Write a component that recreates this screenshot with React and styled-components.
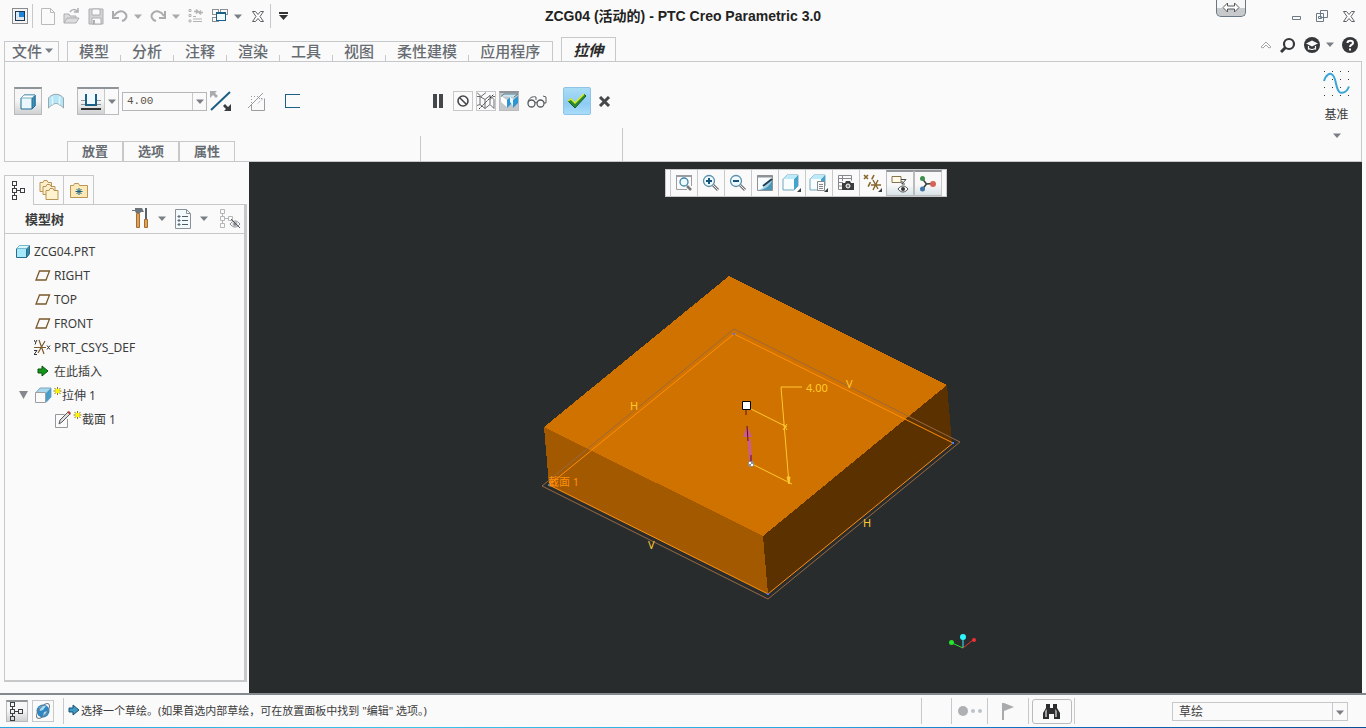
import { useState } from 'react';
import styled, { createGlobalStyle, css } from 'styled-components';

const LINE = '#c6c8ca';
const GREY = '#676c72';
const BLUE = '#1b6085';

const GlobalStyle = createGlobalStyle`
  * { box-sizing: border-box; }
  body {
    margin: 0;
    background: #fafafa;
    color: #3c3c3c;
    font-family: "Noto Sans", "Noto Sans CJK SC", sans-serif;
    font-size: 12px;
  }
  button, input, select { font: inherit; color: inherit; }
  svg { display: block; flex: none; }
`;

const Page = styled.div`
  display: flex;
  flex-direction: column;
  min-height: 100vh;
`;

/* ---------- title bar ---------- */

const TitleBar = styled.header`
  display: grid;
  grid-template-columns: 1fr auto 1fr;
  height: 32px;
`;

const QuickAccess = styled.div`
  display: flex;
  align-items: center;
  padding-left: 12px;
`;

const QuickGroup = styled.div`
  display: flex;
  align-items: center;
  gap: 8px;
`;

const SplitButton = styled.div`
  display: flex;
  align-items: center;
  gap: 6px;
`;

const IconButton = styled.button`
  display: flex;
  align-items: center;
  justify-content: center;
  flex: none;
  width: ${({ $w }) => $w || 16}px;
  height: ${({ $h }) => $h || 20}px;
  padding: 0;
  border: 0;
  background: none;
`;

const QuickSeparator = styled.span`
  width: 1px;
  height: 24px;
  margin: 0 8px 0 4px;
  background: ${LINE};
`;

const Title = styled.h1`
  margin: 0;
  color: #222;
  font-family: "Liberation Sans", "Noto Sans CJK SC", sans-serif;
  font-size: 14px;
  line-height: 32px;
`;

const WindowButtons = styled.div`
  display: flex;
  align-items: center;
  justify-content: flex-end;
  gap: 14px;
  padding-right: 10px;
`;

const DockHandle = styled.button`
  align-self: flex-start;
  display: flex;
  justify-content: center;
  width: 30px;
  height: 17px;
  margin-right: 30px;
  padding: 2px 0 0;
  border: 1px solid #697784;
  border-top: 0;
  border-radius: 0 0 5px 5px;
  background: linear-gradient(#f7f7f7 50%, #c8c9cb 50%);
`;

/* ---------- ribbon ---------- */

const TabRow = styled.nav`
  display: flex;
  align-items: flex-end;
  height: 29px;
  padding-left: 4px;
  gap: 8px;
  font-family: "Noto Sans CJK SC", sans-serif;
  font-size: 15px;
  font-weight: 500;
  color: ${GREY};
`;

const FileTab = styled.button`
  display: flex;
  align-items: center;
  gap: 3px;
  height: 20px;
  padding: 0 5px 2px 7px;
  border: 1px solid ${LINE};
  border-bottom: 0;
  background: none;
  line-height: 18px;
`;

const TabGroup = styled.div`
  display: flex;
  height: 20px;
  border: 1px solid ${LINE};
  border-bottom: 0;
`;

const Tab = styled.button`
  padding: 0 12px 2px 11px;
  border: 0;
  background: linear-gradient(${LINE}, ${LINE}) right bottom / 1px 6px no-repeat;
  line-height: 18px;
  &:last-child { background: none; }
`;

const ActiveTab = styled.button`
  height: 25px;
  margin-bottom: -1px;
  padding: 0 12px 1px 11px;
  border: 1px solid ${LINE};
  border-bottom: 0;
  background: #fafafa;
  color: #2a2a2a;
  font-style: italic;
  font-weight: 700;
  line-height: 24px;
`;

const TabTools = styled.div`
  display: flex;
  align-items: center;
  gap: 8px;
  height: 29px;
  margin-left: auto;
  padding: 0 8px 4px 0;
`;

const Ribbon = styled.section`
  display: flex;
  height: 101px;
  margin: 0 4px;
  border: 1px solid ${LINE};
`;

const Dashboard = styled.div`
  display: flex;
  flex-direction: column;
  justify-content: space-between;
  width: ${({ $w }) => $w}px;
  padding: 25px 0 0 ${({ $pad }) => $pad}px;
`;

const Controls = styled.div`
  display: flex;
  align-items: center;
  height: 28px;
  gap: ${({ $gap }) => $gap}px;
`;

const RibbonLine = styled.span`
  align-self: flex-end;
  width: 1px;
  height: ${({ $h }) => $h}px;
  background: ${LINE};
`;

const pressed = css`
  border: 1px solid #b9bbbd;
  border-top: 2px solid #8f9498;
  background: linear-gradient(#f6f6f6 45%, #cfd0d2);
`;

const PressedButton = styled(IconButton)`
  ${pressed}
`;

const BoxedButton = styled(IconButton)`
  border: 1px solid ${LINE};
`;

const DepthSplit = styled.div`
  display: flex;
  height: 28px;
  margin-left: 9px;
  ${pressed}
`;

const DepthArrow = styled(IconButton)`
  border-left: 1px solid ${LINE};
  background: #fafafa;
`;

const ValueBox = styled.div`
  display: flex;
  width: 85px;
  height: 19px;
  border: 1px solid #b4b6b8;
`;

const ValueInput = styled.input`
  flex: 1;
  min-width: 0;
  padding: 0 4px;
  border: 0;
  background: none;
  color: #5b5348;
  font-family: "Liberation Mono", monospace;
  font-size: 11px;
`;

const ValueArrow = styled(IconButton)`
  border-left: 1px solid ${LINE};
`;

const OptionTabs = styled.div`
  display: flex;
  padding-left: 53px;
`;

const OptionTab = styled.button`
  width: 56px;
  height: 20px;
  padding: 0 0 2px;
  border: 1px solid ${LINE};
  border-bottom: 0;
  background: none;
  color: ${GREY};
  font-family: "Noto Sans CJK SC", sans-serif;
  font-size: 13px;
  font-weight: 700;
  line-height: 18px;
`;

const ConfirmButton = styled(IconButton)`
  margin-left: 8px;
  border: 1px solid #8fc4e6;
  border-radius: 2px;
  background: linear-gradient(#aadcf5, #8ecbf3 60%, #a9dcfb);
`;

const DatumButton = styled.button`
  display: flex;
  flex-direction: column;
  align-items: center;
  gap: 9px;
  margin-left: auto;
  padding: 8px 11px 0;
  border: 0;
  background: none;
  font-size: 12px;
  line-height: 18px;
`;

/* ---------- model tree ---------- */

const Workspace = styled.main`
  display: flex;
  flex: 1;
  padding-right: 4px;
`;

const Sidebar = styled.aside`
  display: flex;
  flex-direction: column;
  flex: none;
  width: 249px;
  padding: 13px 2px 11px 4px;
`;

const SidebarTabs = styled.div`
  display: flex;
`;

const SidebarTab = styled.button`
  display: flex;
  align-items: center;
  justify-content: center;
  width: 30px;
  height: 29px;
  padding: 0;
  border: 1px solid ${LINE};
  border-width: 1px 1px 0 0;
  background: #fafafa;
  ${({ $active }) => $active && css`
    position: relative;
    height: 30px;
    margin-bottom: -1px;
    border-left-width: 1px;
  `}
`;

const TreePanel = styled.div`
  flex: 1;
  border: 1px solid ${LINE};
  border-right-width: 3px;
  border-bottom-width: 2px;
`;

const TreeHeader = styled.div`
  display: flex;
  align-items: center;
  height: 29px;
  padding: 0 1px 1px 20px;
  border-bottom: 1px solid ${LINE};
  gap: 9px;
`;

const TreeTitle = styled.h2`
  flex: 1;
  margin: 0;
  font-family: "Noto Sans CJK SC", sans-serif;
  font-size: 13px;
  line-height: 18px;
`;

const Tree = styled.ul`
  margin: 0;
  padding: 5px 0;
  list-style: none;
`;

const TreeRow = styled.li`
  display: flex;
  align-items: center;
  gap: ${({ $gap }) => $gap || 3}px;
  height: 24px;
  padding-left: ${({ $indent }) => $indent}px;
`;

const TreeToggle = styled(IconButton)`
  justify-content: flex-start;
`;

const TreeLabel = styled.span`
  display: flex;
  align-items: center;
  white-space: nowrap;
`;

/* ---------- graphics area ---------- */

const Viewport = styled.section`
  position: relative;
  display: flex;
  flex: 1;
  min-width: 0;
  background: #282c2d;
`;

const Scene = styled.svg`
  flex: 1;
  width: 100%;
  min-width: 0;
  font-family: "Noto Sans", "Noto Sans CJK SC", sans-serif;
  font-size: 11px;
`;

const ViewToolbar = styled.div`
  position: absolute;
  top: 7px;
  left: 50%;
  display: flex;
  padding: 0 4px;
  border: 1px solid ${LINE};
  background: #fafafa;
  transform: translateX(-50%);
`;

const ViewButton = styled.button`
  display: flex;
  align-items: center;
  justify-content: center;
  width: 27px;
  height: 26px;
  padding: 0;
  border: 0;
  border-left: 1px solid ${LINE};
  background: none;
  ${({ $on }) => $on && css`
    ${pressed}
    width: 28px;
    background: linear-gradient(#f8f8f8 55%, #d8e3e8);
  `}
  &:last-child { border-right: 1px solid ${LINE}; }
`;

/* ---------- status bar ---------- */

const StatusBar = styled.footer`
  display: flex;
  align-items: center;
  height: 34px;
  padding-left: 6px;
  border-top: 2px solid #84898e;
`;

const StatusButtons = styled.div`
  display: flex;
  gap: 4px;
  padding-right: 9px;
`;

const StatusButton = styled.button`
  display: flex;
  align-items: center;
  justify-content: center;
  width: 22px;
  height: 22px;
  padding: 0;
  border: 1px solid ${LINE};
  background: none;
  ${({ $on }) => $on && pressed}
`;

const StatusMessage = styled.p`
  display: flex;
  align-items: center;
  flex: 1;
  gap: 1px;
  margin: 0 0 0 4px;
  padding-bottom: 3px;
  font-size: 11px;
  white-space: nowrap;
`;

const StatusCell = styled.div`
  display: flex;
  align-items: center;
  justify-content: center;
  width: ${({ $w }) => $w}px;
  height: 26px;
  border-left: 1px solid ${LINE};
`;

const FindButton = styled.button`
  display: flex;
  align-items: center;
  justify-content: center;
  width: 40px;
  height: 25px;
  padding: 0;
  border: 1px solid #b9bbbd;
  border-radius: 3px;
  background: none;
`;

const FilterBox = styled.label`
  position: relative;
  width: 176px;
  margin: 0 18px 0 97px;
  svg {
    position: absolute;
    top: 8px;
    right: 4px;
    pointer-events: none;
  }
`;

const FilterSelect = styled.select`
  display: block;
  width: 100%;
  height: 19px;
  padding: 0 6px 2px;
  border: 1px solid ${LINE};
  border-radius: 0;
  appearance: none;
  background: linear-gradient(${LINE}, ${LINE}) right 14px top / 1px 100% no-repeat;
`;

const TaskbarEdge = styled.div`
  height: 1px;
  background: linear-gradient(90deg, #2aa5e0, #3cc4e8 30%, #2aa5e0 60%, #0f6fc0 75%, #0b4f96);
`;

/* ---------- icons ---------- */

const Icon = ({ w = 16, h = w, children, ...rest }) => (
  <svg width={w} height={h} viewBox={`0 0 ${w} ${h}`} fill="none" aria-hidden="true" {...rest}>
    {children}
  </svg>
);

const Caret = ({ color = '#7a7f85' }) => (
  <Icon w={8} h={5}><path d="M0 .5h8L4 5z" fill={color} /></Icon>
);

const AppIcon = () => (
  <Icon shapeRendering="crispEdges">
    <path d="M.5.5h15v15H.5z" stroke="#8a8c8e" fill="#f4f4f4" />
    <path d="M3 3h10v10H3z" fill="#1d3850" />
    <path d="M4 4h3v5h5v3H4z" fill="#dfe8ee" />
    <path d="M7 4h5v5H7z" fill="#1c86dd" />
  </Icon>
);
const NewIcon = () => (
  <Icon w={14} h={17} stroke="#b9babc"><path d="M.5.5h9l4 4v12H.5zM9.500.5v4h4" /></Icon>
);
const OpenIcon = () => (
  <Icon w={17} h={17} stroke="#adaeb0">
    <path d="M1 15V6h5l1 2h6v2M1 15l3-5h12l-3 5z" fill="#dcdcdc" />
    <path d="M7 4c2-3 5-3 7-1M15 0v4h-4" strokeWidth="1.500" />
  </Icon>
);
const SaveIcon = () => (
  <Icon h={17} stroke="#adaeb0">
    <path d="M1 1h14v15H1z" fill="#d3d3d4" />
    <path d="M4 1h8v6H4zM4 10h9v6H4z" fill="#fafafa" />
    <path d="M6 12v4" strokeWidth="2" />
  </Icon>
);
const UndoIcon = ({ flip }) => (
  <Icon h={14}>
    <g transform={flip ? 'translate(16 0) scale(-1 1)' : undefined}>
      <path d="M2 7c3-5 8-6 11-3s1 7-3 8" stroke="#a9abad" strokeWidth="2" />
      <path d="M1 2v7h6" stroke="#a9abad" strokeWidth="2" />
    </g>
  </Icon>
);
const RegenIcon = () => (
  <Icon stroke="#b1b3b5">
    <path d="M1 1.500h2v2H1zM1 6.500h2v2H1zM1 12h2v2H1zM5 8.500h3M5 13.500h9M5 11h9" />
    <path d="M6 3.500h4M8 1.500l2 2-2 2M15 4.500h-4M13 2.500l-2 2 2 2" strokeWidth="1.500" />
  </Icon>
);
const WindowsIcon = () => (
  <Icon stroke="#8b9095" shapeRendering="crispEdges">
    <path d="M.5 1.500h6v5h-6zM8.500 1.500h7v5h-7zM.5 9.500h6v4h-6z" />
    <path d="M4.500 4.500h9v8h-9z" stroke={BLUE} fill="#f3fbff" />
    <path d="M4 5.500h10" stroke={BLUE} />
  </Icon>
);
const CloseIcon = () => (
  <Icon w={12} h={11} stroke="#5d6063">
    <path d="M.5.5h3L6 3.500 8.500.5h3L8 5.500l3.500 5h-3L6 7.500l-2.500 3h-3L4 5.500z" fill="#fff" />
  </Icon>
);
const MoreIcon = () => (
  <Icon w={9} h={8}><path d="M0 0h9v2H0zM0 3h9L4.500 8z" fill="#333" /></Icon>
);
const HandleIcon = () => (
  <Icon w={18} h={11} stroke="#55595d">
    <path d="M1 5.500l4.500-4.500v3h7V1L17 5.500 12.500 10V7h-7v3z" fill="#fff" />
  </Icon>
);
const MinimizeIcon = () => (
  <Icon w={9} h={14} stroke="#6d7a86"><path d="M.5 7.500h8v3h-8z" /></Icon>
);
const RestoreIcon = () => (
  <Icon w={12} h={12} stroke="#6d7a86">
    <path d="M4.500.5h7v7h-7zM.5 3.500h7v8h-7z" fill="#fafafa" /><path d="M2.500 6.500h3v2h-3z" />
  </Icon>
);
const CollapseIcon = () => (
  <Icon w={12} h={8} stroke="#a3a5a8"><path d="M1 6l5-5 5 5-2 1-3-3-3 3z" fill="#fff" /></Icon>
);
const SearchIcon = () => (
  <Icon stroke="#35383b"><circle cx="9" cy="7" r="5" strokeWidth="2.200" /><path d="M5.500 10.500L1 15" strokeWidth="3" /></Icon>
);
const LearnIcon = () => (
  <Icon>
    <circle cx="8" cy="8" r="8" fill="#35383b" />
    <path d="M2 6.500L8 3.500l6 3-6 3z" fill="#fafafa" />
    <path d="M4.500 9v3c1.500-.5 2.500.5 3.500.5s2-1 3.500-.5V9" stroke="#fafafa" strokeWidth="1.200" />
  </Icon>
);
const HelpIcon = () => (
  <Icon>
    <circle cx="8" cy="8" r="8" fill="#35383b" />
    <path d="M5.500 6c0-3 5.500-3 5.500 0 0 2-3 1.500-3 4" stroke="#fff" strokeWidth="2" />
    <path d="M7 11.500h2v2H7z" fill="#fff" />
  </Icon>
);

const SolidIcon = () => (
  <Icon w={16} stroke="#1f6b90" strokeLinejoin="round">
    <path d="M1 4l3-3h11v11l-3 3H1z" fill="#eaf8fd" />
    <path d="M12 4l3-3v11l-3 3z" fill="#3f93ba" />
    <path d="M1 4l3-3h11l-3 3z" fill="#fff" stroke="#6fa8c0" />
  </Icon>
);
const SurfaceIcon = () => (
  <Icon>
    <path d="M.5 5c4-5 11-5 15 0v10c-2-2-3-3-4-3-2-2-5-2-7 0-1 0-2 1-4 3z" fill="#b5e6f5" stroke="#9aa7ad" />
    <path d="M4.500 3.500v8M11.500 3.500v8" stroke="#e2f7fd" strokeWidth="1.500" />
  </Icon>
);
const DepthIcon = () => (
  <Icon w={24} h={22}>
    <path d="M2 9.500h20M2 13.500h20" stroke="#8e9296" />
    <path d="M7 3v11h10V3" fill="#eefaff" stroke={BLUE} strokeWidth="2" />
    <path d="M2 18h20" stroke="#333" strokeWidth="2" />
  </Icon>
);
const FlipIcon = () => (
  <Icon w={21} h={20}>
    <path d="M1 19L20 1" stroke={BLUE} strokeWidth="2" />
    <path d="M0 0h7L5 2l3 3-2 2-3-3-3 3z" fill="#a9abad" />
    <path d="M21 20h-7l2-2-3-3 2-2 3 3 3-3z" fill="#3a3d40" />
  </Icon>
);
const CutIcon = () => (
  <Icon w={19} h={19} stroke="#9a9da0">
    <path d="M4.500 12v6.500h13V6.500" /><path d="M4.500 4v7M4 4.500h8" strokeDasharray="1 2" /><path d="M1 16L16 1" />
    <path d="M12 6.500h4L10 12" strokeDasharray="1 1" />
  </Icon>
);
const ThickenIcon = () => (
  <Icon w={16} stroke={BLUE} shapeRendering="crispEdges"><path d="M15.500 1.500h-14v13h14" /></Icon>
);
const PauseIcon = () => (
  <Icon w={12} h={14}><path d="M1 0h4v14H1zM7 0h4v14H7z" fill="#45484b" /></Icon>
);
const NoneIcon = () => (
  <Icon w={14} stroke="#45484b"><circle cx="7" cy="7" r="5" strokeWidth="1.600" /><path d="M3.500 3.500l7 7" strokeWidth="1.600" /></Icon>
);
const WirePreviewIcon = () => (
  <Icon w={18} stroke="#6a6c6e">
    <path d="M0 4.500h3l5 3v9l-5-4-3 1M3 4.500v8M8 7.500l5-4v9l-5 4M13 7.500l3-3h2M13 3.500l4 4v9l-4-4M0 .5l4 4M9 .5l-5 4" />
    <path d="M2 17L17 2" strokeDasharray="2 1" stroke="#333" />
  </Icon>
);
const ShadePreviewIcon = () => (
  <Icon w={18} h={17}>
    <path d="M0 0h18v17H0z" fill="#c3c7c9" />
    <path d="M1 3l6 4v7l-6-5z" fill="#fff" /><path d="M7 7l5-4v7l-5 5z" fill="#2c95d3" />
    <path d="M10 3l4 4v7l-4-5z" fill="#e8f8fe" /><path d="M13 7l5-4v7l-5 5z" fill="#2c95d3" />
    <path d="M1 3.500L4 1h14l-4 3" stroke="#5c7886" fill="#c9e7f2" />
  </Icon>
);
const GlassesIcon = () => (
  <Icon w={20} h={13} stroke="#55595d">
    <circle cx="4.500" cy="8.500" r="3.500" strokeWidth="1.300" /><circle cx="13.500" cy="8.500" r="3.500" strokeWidth="1.300" />
    <path d="M8 8c0-1 2-1 2 0M1 7C2 3 5 1 9 2v3M17 8h2V2l-3-1" />
  </Icon>
);
const CheckIcon = () => (
  <Icon w={20} h={15}>
    <path d="M1 7l3-2 4 4L17 0l2 2L8 14z" fill="#2c8a32" stroke="#1d5b2b" /><path d="M1 7l3-2 4 4L17 0" stroke="#d6ec25" strokeWidth="1.500" />
  </Icon>
);
const CancelIcon = () => (
  <Icon w={13} h={11} stroke="#45484b"><path d="M2 1l9 9M11 1l-9 9" strokeWidth="3" /></Icon>
);
const DatumIcon = () => {
  const dots = [1, 9, 17, 25];
  return (
    <Icon w={27}>
      {dots.map((y) => dots.map((x) => <path key={`${x}-${y}`} d={`M${x} ${y}h1v1h-1z`} fill="#333" />))}
      <path d="M1 11C3 4 7 3 9 4.500c5 3 3 15 8 18 4 1 7-1 9-6" stroke="#3ba5d5" strokeWidth="2" />
    </Icon>
  );
};

const TreeIcon = () => (
  <Icon w={14} h={19} stroke="#3c3f42" shapeRendering="crispEdges">
    <path d="M.5.5h4v4h-4zM.5 7.500h4v4h-4zM.5 14.500h4v4h-4zM8.500 7.500h4v4h-4zM2.500 4.500v3M2.500 11.500v3M4.500 9.500h4" />
  </Icon>
);
const FoldersIcon = () => (
  <Icon w={20} stroke="#ba9554">
    <path d="M1 2.500h3l1-2h3l1 2h3.500v9H1z" fill="#fbeecb" />
    <path d="M4 6.500h3l1-2h3l1 2h4v8H4z" fill="#fbeecb" />
    <path d="M7 10.500h3l1-2h3l1 2h4v9H7z" fill="#fdf3cf" />
  </Icon>
);
const FavoritesIcon = () => (
  <Icon w={18} h={17} stroke="#ba9554">
    <path d="M.5 3.500h3l1-2h4l1 2h8v12H.5z" fill="#fbeab8" />
    <path d="M9 6v7M5.500 9.500h7M6.500 7l5 5M11.500 7l-5 5" stroke={BLUE} />
  </Icon>
);
const ToolsIcon = () => (
  <Icon w={17} h={21}>
    <path d="M4.500 5.500h3v14h-3z" fill="#e0a35d" stroke="#a56d2d" />
    <path d="M0 2h3V0h7l2 4H9L8 5H4L3 3H0z" fill="#6c747b" />
    <path d="M14 0v12" stroke="#596066" strokeWidth="2" />
    <path d="M12.500 11.500h3v8h-3z" fill="#e0a35d" stroke="#a56d2d" />
  </Icon>
);
const ListIcon = () => (
  <Icon w={16} h={20} stroke="#8a9298">
    <path d="M.5.5h11l4 4v15H.5z" fill="#f3fafd" /><path d="M11.500.5v4h4" />
    <path d="M3 7h2v1H3zM3 11h2v1H3zM3 15h2v1H3zM7 7.500h6M7 11.500h6M7 15.500h6" stroke="#4f5a62" />
  </Icon>
);
const TreeHideIcon = () => (
  <Icon w={21} h={20} stroke="#b4b6b8">
    <path d="M.5.5h4v4h-4zM.5 7.500h4v4h-4zM.5 14.500h4v4h-4zM8.500 7.500h4v4h-4zM4.500 9.500h4M2.500 4.500v3M2.500 11.500v3" />
    <path d="M10 15c3-4 7-4 10 0-3 4-7 4-10 0z" stroke="#85898d" fill="#fafafa" /><circle cx="15" cy="15" r="2" fill="#85898d" /><path d="M11 10l9 9" stroke="#55595d" />
  </Icon>
);
const PartIcon = () => (
  <Icon w={14} h={13} stroke="#2b6d8c" strokeLinejoin="round">
    <path d="M.5 3.500l3-3h10v8l-3 4H.5z" fill="#a8e8fb" /><path d="M10.500 3.500l3-3v8l-3 4z" fill="#3389aa" />
    <path d="M.5 3.500l3-3h10l-3 3z" fill="#d9f6fd" stroke="#7ab6cd" />
  </Icon>
);
const PlaneIcon = () => (
  <Icon h={11} stroke="#7b5a2b"><path d="M4.500 1H14.500l-3.500 9H1z" strokeWidth="1.300" /></Icon>
);
const CsysIcon = () => (
  <Icon w={17} stroke="#7b5a2b">
    <path d="M0 8.500h12M5 1l5 14M11 2L4 14" strokeWidth="1.200" />
    <path d="M0 1l1.500 2.500L3 1M2 3.500L1 5.500M0 11.500h3L0 15.500h3M13 6.500l3 4M16 6.500l-3 4" stroke="#333" />
  </Icon>
);
const InsertIcon = () => (
  <Icon h={12}><path d="M3 4h4V1l6 5-6 5V8H3z" fill="#13961a" stroke="#0a5210" /></Icon>
);
const ExtrudeIcon = () => (
  <Icon w={17}>
    <path d="M1 5.500L5 1h11v9l-5 5.500" fill="#a9d8ee" stroke="#7fa7ba" />
    <path d="M11 6l5-5v9l-5 5z" fill="#4a9cc9" /><path d="M.5 5.500h10v10H.5z" fill="#fafafa" stroke="#9c9ea0" />
  </Icon>
);
const SketchIcon = () => (
  <Icon w={17}>
    <path d="M12.500 8v8.500H.5v-13h9" stroke="#96989a" /><path d="M4 13l1-4 8-8 2 2-8 8z" fill="#ddd" stroke="#55595d" /><path d="M12 1l2-1 2 2-1 2z" fill="#b54136" />
  </Icon>
);
const StarIcon = () => (
  <Icon w={9} h={16}><path d="M4.500 0v8M.5 4h8M1.500 1l6 6M7.500 1l-6 6" stroke="#8c7d12" /><path d="M2.500 2h4v4h-4z" fill="#fff200" /></Icon>
);

const ZoomGlyph = ({ sign }) => (
  <Icon w={18}>
    <path d="M11 11l5 5" stroke="#777" strokeWidth="3" /><path d="M11 11l5 5" stroke="#e8e8e8" />
    <circle cx="7" cy="7" r="5.500" fill="#eefaff" stroke="#5b8fa8" strokeWidth="1.300" />
    <path d={sign} stroke="#13557e" strokeWidth="2" />
  </Icon>
);
const RefitIcon = () => (
  <Icon w={18}>
    <path d="M1 2h16" stroke="#9a9ea2" strokeWidth="2" /><path d="M1.500 2v13.500H12M16.500 3v9" stroke="#9a9ea2" />
    <path d="M12 12l4 4" stroke="#777" strokeWidth="2.500" />
    <circle cx="9" cy="8" r="4" fill="#eefaff" stroke="#3e85a5" strokeWidth="1.300" />
  </Icon>
);
const RepaintIcon = () => (
  <Icon>
    <path d="M.5.500h15v15H.5z" fill="#f8fdff" stroke="#8e9296" /><path d="M1 15c4-1 6-3 8-5l6-6v11z" fill="#9dd0e4" />
    <path d="M4 15c5-1 8-4 11-9v9z" fill="#4b97b8" /><path d="M6 11l9-7" stroke="#1c3e52" strokeWidth="2" /><path d="M0 1.500h16" stroke="#8e9296" strokeWidth="2" />
  </Icon>
);
const CubeViewIcon = ({ page }) => (
  <Icon w={19} h={18}>
    <path d="M1 5l4-4h11v11l-4 4H1z" fill="#f8fdff" stroke="#71a5bc" />
    <path d="M12 5l4-4v11l-4 4z" fill="#45a3cc" /><path d="M1 5l4-4h11l-4 4z" fill="#bdeaf8" />
    {page && <><path d="M8.500 7.500h7v9h-7z" fill="#fafafa" stroke="#85898d" /><path d="M10 10.500h4M10 12.500h4M10 14.500h4" stroke="#85898d" /></>}
    <path d="M19 14v4h-4z" fill="#3a3d40" />
  </Icon>
);
const ViewManagerIcon = () => (
  <Icon w={18} stroke="#85898d">
    <path d="M1.500 1.500h13v5M1.500 1.500v14H5M1 4.500h13M1 8.500h5M1 12h4M5.500 1v6" />
    <path d="M5 9h3l1-2h4l1 2h3v7H5z" fill="#3a3d40" stroke="none" /><circle cx="11" cy="12" r="2" fill="#777" stroke="#fff" />
  </Icon>
);
const DatumDisplayIcon = () => (
  <Icon w={19} h={18} stroke="#86662c">
    <path d="M1 1l4 4M5 1L1 5" strokeWidth="1.600" /><path d="M11 1L4 15" strokeDasharray="5 3" strokeWidth="1.600" />
    <path d="M8 11h10M10 6l5 9M15 6l-5 10" strokeWidth="1.400" /><path d="M19 14v4h-4z" fill="#3a3d40" stroke="none" />
  </Icon>
);
const AnnotationIcon = () => (
  <Icon w={18} h={18}>
    <path d="M1 1.500h9v6H1z" fill="#fffbe6" stroke="#86744f" /><path d="M10 4.500h5L11 9M11 6v3h3" stroke="#45484b" />
    <path d="M7 14c3-4 7-4 10 0-3 4-7 4-10 0z" fill="#fff" stroke="#45484b" /><circle cx="12" cy="14" r="2" fill="#333" />
  </Icon>
);
const SpinCenterIcon = () => (
  <Icon w={18} h={18}>
    <path d="M3.500 4l4 5 7-.5M7.500 9l-4 5" stroke="#35383b" strokeWidth="1.500" />
    <circle cx="3.500" cy="3.500" r="2.500" fill="#3f8e4d" /><circle cx="14" cy="9" r="3" fill="#d66354" /><circle cx="3.500" cy="14" r="2.500" fill="#3e73a8" />
  </Icon>
);

const BrowserIcon = () => (
  <Icon w={18}>
    <circle cx="9" cy="9" r="6.500" fill="#2d87c4" /><path d="M5 6c2-3 5-3 7-2l-3 4-3 1zM10 10l4-1-2 4-3 1z" fill="#a5daf0" />
    <ellipse cx="9" cy="9" rx="9" ry="4" transform="rotate(-50 9 9)" stroke="#6f7b86" />
  </Icon>
);
const PromptIcon = () => (
  <Icon w={12} h={12}><path d="M1 4h4V1l6 5-6 5V8H1z" fill="#3b9ac6" stroke="#1a4f70" /></Icon>
);
const RegenStatusIcon = () => (
  <Icon w={26} h={12}><circle cx="6" cy="6" r="5" fill="#aeb0b3" /><circle cx="16" cy="6" r="2" fill="#bcc3c8" /><circle cx="23" cy="6" r="2" fill="#bcc3c8" /></Icon>
);
const FlagIcon = () => (
  <Icon w={12} h={17}><path d="M0 0h2v17H0zM2 0l10 4L2 8z" fill="#a9abad" /></Icon>
);
const BinocularsIcon = () => (
  <Icon w={17} h={16}>
    <path d="M3 1h4v4h3V1h4v4l3 5v6h-6v-5H6v5H0v-6l3-5z" fill="#2b2d2f" />
    <path d="M2 8l2-2v8H2zM12 6l2 2v6h-2z" fill="#9b9ea1" />
  </Icon>
);

/* ---------- data ---------- */

const ribbonTabs = ['模型', '分析', '注释', '渲染', '工具', '视图', '柔性建模', '应用程序'];
const optionTabs = ['放置', '选项', '属性'];

const treeRows = [
  { label: 'ZCG04.PRT', indent: 11, gap: 4, icon: <PartIcon /> },
  { label: 'RIGHT', indent: 30, icon: <PlaneIcon /> },
  { label: 'TOP', indent: 30, icon: <PlaneIcon /> },
  { label: 'FRONT', indent: 30, icon: <PlaneIcon /> },
  { label: 'PRT_CSYS_DEF', indent: 29, icon: <CsysIcon /> },
  { label: '在此插入', indent: 30, icon: <InsertIcon /> },
  { label: '拉伸 1', indent: 14, gap: 1, icon: <ExtrudeIcon />, open: true, fresh: true },
  { label: '截面 1', indent: 50, gap: 1, icon: <SketchIcon />, fresh: true },
];

const viewButtons = [
  { name: '重新调整', icon: <RefitIcon /> },
  { name: '放大', icon: <ZoomGlyph sign="M4 7h6M7 4v6" /> },
  { name: '缩小', icon: <ZoomGlyph sign="M4 7h6" /> },
  { name: '重画', icon: <RepaintIcon /> },
  { name: '显示样式', icon: <CubeViewIcon /> },
  { name: '已命名视图', icon: <CubeViewIcon page /> },
  { name: '视图管理器', icon: <ViewManagerIcon /> },
  { name: '基准显示', icon: <DatumDisplayIcon /> },
  { name: '注释显示', icon: <AnnotationIcon />, on: true },
  { name: '旋转中心', icon: <SpinCenterIcon />, on: true },
];

function ModelScene() {
  return (
    <Scene viewBox="0 0 1113 531" role="img" aria-label="ZCG04">
      <g shapeRendering="crispEdges">
        <path d="M480 114l218 109-184 151-219-109z" fill="#d07200" />
        <path d="M295 265l219 109 5 58-219-109z" fill="#a35900" />
        <path d="M514 374l184-151 5 58-184 151z" fill="#5b3100" />
      </g>
      <g fill="none">
        <path d="M485 167l226 113-192 157-226-113z" stroke="#9a6840" />
        <path d="M485 172l219 109-185 151-219-109z" stroke="#ff8f0c" />
        <path d="M553 225h-21l8 97M502 247l36 18M503 302l40 20" stroke="#ffc92e" />
        <path d="M534 262l4 6M538 262l-4 6" stroke="#ffc92e" />
        <path d="M502 301l-2-24" stroke="#c95a94" strokeWidth="3" />
        <path d="M498 264l-4 11h9z" fill="#c95a94" />
        <path d="M502 301v-8M499 279l-1-15M497 247v6" stroke="#5c1010" />
      </g>
      <path d="M538 315h3l-1 7z" fill="#ffc92e" stroke="#ffc92e" />
      <path d="M493.500 239.500h8v8h-8z" fill="#fff" stroke="#000" />
      <circle cx="502" cy="302" r="3" fill="#8f9396" />
      <path d="M500 300h2v2h-2zM502 302h2v2h-2z" fill="#fff" />
      <path d="M484 171h2v2h-2zM703 280h2v2h-2zM518 431h2v2h-2zM299 322h2v2h-2z" fill="#5577f0" />
      <g fill="#ffc92e">
        <text x="557" y="230">4.00</text>
        <text x="381" y="248">H</text>
        <text x="597" y="226">V</text>
        <text x="614" y="365">H</text>
        <text x="399" y="387">V</text>
      </g>
      <text x="299" y="324" fill="#ff8f0c">截面 1</text>
      <path d="M714 486v-10" stroke="#2ff5ff" />
      <path d="M714 486l-11-5" stroke="#26e62c" />
      <path d="M714 486l10-8" stroke="#f03030" />
      <circle cx="714" cy="475" r="3" fill="#2ff5ff" />
      <circle cx="702.500" cy="480.500" r="2.500" fill="#26e62c" />
      <circle cx="725" cy="478" r="2" fill="#f03030" />
    </Scene>
  );
}

export default function App() {
  const [depth, setDepth] = useState('4.00');

  return (
    <Page>
      <GlobalStyle />
      <TitleBar>
        <QuickAccess>
          <IconButton aria-label="Creo"><AppIcon /></IconButton>
          <QuickSeparator />
          <QuickGroup>
            <IconButton $w={14} aria-label="新建"><NewIcon /></IconButton>
            <IconButton $w={17} aria-label="打开"><OpenIcon /></IconButton>
            <IconButton aria-label="保存"><SaveIcon /></IconButton>
            <SplitButton>
              <IconButton aria-label="撤消"><UndoIcon /></IconButton>
              <IconButton $w={8} aria-label="撤消列表"><Caret color="#a9abad" /></IconButton>
            </SplitButton>
            <SplitButton>
              <IconButton aria-label="重做"><UndoIcon flip /></IconButton>
              <IconButton $w={8} aria-label="重做列表"><Caret color="#a9abad" /></IconButton>
            </SplitButton>
            <IconButton aria-label="重新生成"><RegenIcon /></IconButton>
            <SplitButton>
              <IconButton aria-label="窗口"><WindowsIcon /></IconButton>
              <IconButton $w={8} aria-label="窗口列表"><Caret /></IconButton>
            </SplitButton>
            <IconButton aria-label="关闭"><CloseIcon /></IconButton>
          </QuickGroup>
          <QuickSeparator />
          <IconButton $w={9} aria-label="自定义"><MoreIcon /></IconButton>
        </QuickAccess>
        <Title>ZCG04 (活动的) - PTC Creo Parametric 3.0</Title>
        <WindowButtons>
          <DockHandle aria-label="停靠"><HandleIcon /></DockHandle>
          <IconButton $w={12} aria-label="最小化"><MinimizeIcon /></IconButton>
          <IconButton $w={12} aria-label="还原"><RestoreIcon /></IconButton>
          <IconButton $w={14} aria-label="关闭窗口"><CloseIcon /></IconButton>
        </WindowButtons>
      </TitleBar>

      <TabRow>
        <FileTab>文件<Caret /></FileTab>
        <TabGroup>
          {ribbonTabs.map((tab) => <Tab key={tab}>{tab}</Tab>)}
        </TabGroup>
        <ActiveTab>拉伸</ActiveTab>
        <TabTools>
          <IconButton $w={12} aria-label="最小化功能区"><CollapseIcon /></IconButton>
          <IconButton aria-label="搜索"><SearchIcon /></IconButton>
          <SplitButton>
            <IconButton aria-label="学习"><LearnIcon /></IconButton>
            <IconButton $w={8} aria-label="学习列表"><Caret /></IconButton>
          </SplitButton>
          <IconButton aria-label="帮助"><HelpIcon /></IconButton>
        </TabTools>
      </TabRow>

      <Ribbon>
        <Dashboard $w={415} $pad={9}>
          <Controls $gap={3}>
            <Controls $gap={5}>
              <PressedButton $w={28} $h={28} aria-label="实体"><SolidIcon /></PressedButton>
              <IconButton $w={18} aria-label="曲面"><SurfaceIcon /></IconButton>
            </Controls>
            <DepthSplit>
              <IconButton $w={26} $h={25} aria-label="深度"><DepthIcon /></IconButton>
              <DepthArrow $w={14} $h={25} aria-label="深度选项"><Caret /></DepthArrow>
            </DepthSplit>
            <ValueBox>
              <ValueInput aria-label="深度值" value={depth} onChange={(e) => setDepth(e.target.value)} />
              <ValueArrow $w={14} $h={17} aria-label="最近值"><Caret /></ValueArrow>
            </ValueBox>
            <Controls $gap={16}>
              <IconButton $w={21} aria-label="反向"><FlipIcon /></IconButton>
              <IconButton $w={19} aria-label="移除材料"><CutIcon /></IconButton>
              <IconButton $w={20} aria-label="加厚"><ThickenIcon /></IconButton>
            </Controls>
          </Controls>
          <OptionTabs>
            {optionTabs.map((tab) => <OptionTab key={tab}>{tab}</OptionTab>)}
          </OptionTabs>
        </Dashboard>
        <RibbonLine $h={25} />
        <Dashboard $w={201} $pad={4}>
          <Controls $gap={3}>
            <IconButton $w={25} $h={20} aria-label="暂停"><PauseIcon /></IconButton>
            <BoxedButton $w={20} $h={20} aria-label="无预览"><NoneIcon /></BoxedButton>
            <BoxedButton $w={20} $h={20} aria-label="分离预览"><WirePreviewIcon /></BoxedButton>
            <PressedButton $w={20} $h={20} aria-label="连接预览"><ShadePreviewIcon /></PressedButton>
            <IconButton $w={30} $h={20} aria-label="校验"><GlassesIcon /></IconButton>
            <ConfirmButton $w={28} $h={28} aria-label="确定"><CheckIcon /></ConfirmButton>
            <IconButton $w={20} $h={20} aria-label="取消"><CancelIcon /></IconButton>
          </Controls>
        </Dashboard>
        <RibbonLine $h={33} />
        <DatumButton>
          <DatumIcon />
          基准
          <Caret />
        </DatumButton>
      </Ribbon>

      <Workspace>
        <Sidebar>
          <SidebarTabs>
            <SidebarTab $active aria-label="模型树"><TreeIcon /></SidebarTab>
            <SidebarTab aria-label="文件夹浏览器"><FoldersIcon /></SidebarTab>
            <SidebarTab aria-label="收藏夹"><FavoritesIcon /></SidebarTab>
          </SidebarTabs>
          <TreePanel>
            <TreeHeader>
              <TreeTitle>模型树</TreeTitle>
              <IconButton $w={17} $h={22} aria-label="设置"><ToolsIcon /></IconButton>
              <IconButton $w={8} aria-label="设置列表"><Caret /></IconButton>
              <IconButton $w={16} $h={22} aria-label="显示"><ListIcon /></IconButton>
              <IconButton $w={8} aria-label="显示列表"><Caret /></IconButton>
              <IconButton $w={26} $h={22} aria-label="隐藏树"><TreeHideIcon /></IconButton>
            </TreeHeader>
            <Tree>
              {treeRows.map(({ label, indent, gap, icon, open, fresh }) => (
                <TreeRow key={label} $indent={indent} $gap={gap}>
                  {open && <TreeToggle $w={15} aria-label="折叠"><Icon w={9} h={8}><path d="M0 0h9L4.500 8z" fill="#85898d" /></Icon></TreeToggle>}
                  {icon}
                  <TreeLabel>{fresh && <StarIcon />}{label}</TreeLabel>
                </TreeRow>
              ))}
            </Tree>
          </TreePanel>
        </Sidebar>
        <Viewport>
          <ModelScene />
          <ViewToolbar>
            {viewButtons.map(({ name, icon, on }) => (
              <ViewButton key={name} $on={on} aria-label={name}>{icon}</ViewButton>
            ))}
          </ViewToolbar>
        </Viewport>
      </Workspace>

      <StatusBar>
        <StatusButtons>
          <StatusButton $on aria-label="导航器"><TreeIcon /></StatusButton>
          <StatusButton aria-label="浏览器"><BrowserIcon /></StatusButton>
        </StatusButtons>
        <StatusCell $w={1} />
        <StatusMessage>
          <PromptIcon />
          选择一个草绘。(如果首选内部草绘，可在放置面板中找到 "编辑" 选项。)
        </StatusMessage>
        <StatusCell $w={30} />
        <StatusCell $w={36}><RegenStatusIcon /></StatusCell>
        <StatusCell $w={41}><FlagIcon /></StatusCell>
        <StatusCell $w={46}>
          <FindButton aria-label="查找"><BinocularsIcon /></FindButton>
        </StatusCell>
        <StatusCell $w={1} />
        <FilterBox>
          <FilterSelect aria-label="选择过滤器" defaultValue="草绘">
            <option>草绘</option>
          </FilterSelect>
          <Caret />
        </FilterBox>
      </StatusBar>
      <TaskbarEdge />
    </Page>
  );
}
